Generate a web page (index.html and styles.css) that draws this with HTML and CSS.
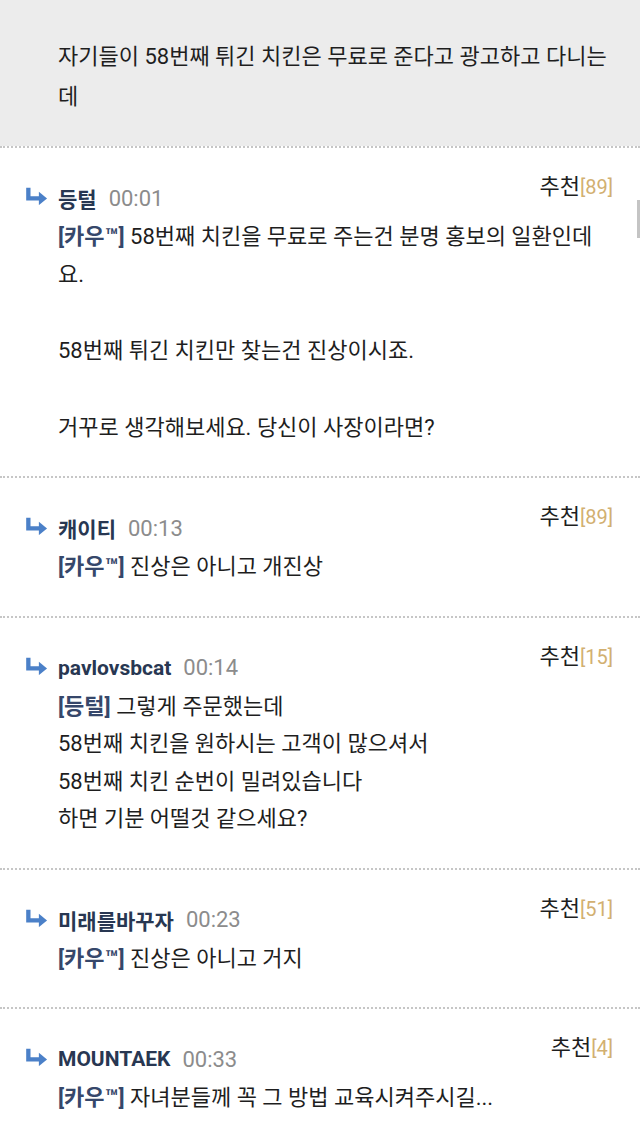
FILE: index.html
```html
<!DOCTYPE html>
<html lang="ko">
<head>
    <meta charset="UTF-8">
    <meta name="viewport" content="width=device-width, initial-scale=1.0">
    <title>댓글</title>
    <link rel="stylesheet" href="styles.css">
</head>
<body>
    <div class="post">
        자기들이 58번째 튀긴 치킨은 무료로 준다고 광고하고 다니는<br>데
    </div>

    <div class="scroll-thumb"></div>

    <ul class="comments">
        <li class="comment">
            <div class="header">
                <div class="head">
                    <svg class="reply" viewBox="0 0 24 18"><path d="M3.5 0.5 V11.5 H16" /><polygon points="14.5,4.5 23,11.5 14.5,18.5" /></svg>
                    <span class="nick">등털</span>
                    <span class="time">00:01</span>
                </div>
                <div class="vote">추천<span class="cnt">[89]</span></div>
            </div>
            <div class="body">
                <p><span class="tag">[카우™]</span> 58번째 치킨을 무료로 주는건 분명 홍보의 일환인데<br>요.</p>
                <p>58번째 튀긴 치킨만 찾는건 진상이시죠.</p>
                <p>거꾸로 생각해보세요. 당신이 사장이라면?</p>
            </div>
        </li>

        <li class="comment">
            <div class="header">
                <div class="head">
                    <svg class="reply" viewBox="0 0 24 18"><path d="M3.5 0.5 V11.5 H16" /><polygon points="14.5,4.5 23,11.5 14.5,18.5" /></svg>
                    <span class="nick">캐이티</span>
                    <span class="time">00:13</span>
                </div>
                <div class="vote">추천<span class="cnt">[89]</span></div>
            </div>
            <div class="body">
                <p><span class="tag">[카우™]</span> 진상은 아니고 개진상</p>
            </div>
        </li>

        <li class="comment">
            <div class="header">
                <div class="head">
                    <svg class="reply" viewBox="0 0 24 18"><path d="M3.5 0.5 V11.5 H16" /><polygon points="14.5,4.5 23,11.5 14.5,18.5" /></svg>
                    <span class="nick">pavlovsbcat</span>
                    <span class="time">00:14</span>
                </div>
                <div class="vote">추천<span class="cnt">[15]</span></div>
            </div>
            <div class="body">
                <p><span class="tag">[등털]</span> 그렇게 주문했는데<br>58번째 치킨을 원하시는 고객이 많으셔서<br>58번째 치킨 순번이 밀려있습니다<br>하면 기분 어떨것 같으세요?</p>
            </div>
        </li>

        <li class="comment">
            <div class="header">
                <div class="head">
                    <svg class="reply" viewBox="0 0 24 18"><path d="M3.5 0.5 V11.5 H16" /><polygon points="14.5,4.5 23,11.5 14.5,18.5" /></svg>
                    <span class="nick">미래를바꾸자</span>
                    <span class="time">00:23</span>
                </div>
                <div class="vote">추천<span class="cnt">[51]</span></div>
            </div>
            <div class="body">
                <p><span class="tag">[카우™]</span> 진상은 아니고 거지</p>
            </div>
        </li>

        <li class="comment">
            <div class="header">
                <div class="head">
                    <svg class="reply" viewBox="0 0 24 18"><path d="M3.5 0.5 V11.5 H16" /><polygon points="14.5,4.5 23,11.5 14.5,18.5" /></svg>
                    <span class="nick">MOUNTAEK</span>
                    <span class="time">00:33</span>
                </div>
                <div class="vote">추천<span class="cnt">[4]</span></div>
            </div>
            <div class="body">
                <p><span class="tag">[카우™]</span> 자녀분들께 꼭 그 방법 교육시켜주시길...</p>
            </div>
        </li>
    </ul>
</body>
</html>
```

FILE: styles.css
```css
body {
    margin: 0;
    background: #ffffff;
    color: #1e1e1e;
    font-family: Roboto, "Noto Sans CJK KR", sans-serif;
    font-size: 22px;
    position: relative;
}
.post {
    background: #ececec;
    padding: 37px 20px 29px 58px;
    line-height: 40px;
}
.scroll-thumb {
    position: absolute;
    top: 200px;
    right: 0;
    width: 3px;
    height: 38px;
    background: #c4c4c4;
}
.comments {
    list-style: none;
    margin: 0;
    padding: 0;
}
.comment {
    border-top: 2px dotted #c6c6c6;
    padding: 24px 27px 30px 25px;
}
.header {
    display: flex;
    justify-content: space-between;
    align-items: flex-start;
}
.head {
    display: flex;
    align-items: center;
    margin-top: 11px;
    height: 30px;
}
.reply {
    width: 23px;
    height: 18px;
    margin-right: 10px;
    margin-top: -4px;
}
.reply path {
    fill: none;
    stroke: #4b80c8;
    stroke-width: 4.5;
}
.reply polygon {
    fill: #4b80c8;
}
.nick {
    font-weight: bold;
    color: #283752;
    font-size: 21px;
}
.time {
    color: #8c8c8c;
    font-size: 22px;
    margin-left: 12px;
}
.vote {
    line-height: 30px;
    font-size: 22px;
}
.cnt {
    color: #d2b071;
    font-size: 20px;
}
.body {
    margin-top: 5px;
    padding-left: 33px;
    line-height: 37.5px;
}
.body p {
    margin: 0;
}
.body p + p {
    margin-top: 39px;
}
.tag {
    font-weight: bold;
    color: #36476a;
}
```
